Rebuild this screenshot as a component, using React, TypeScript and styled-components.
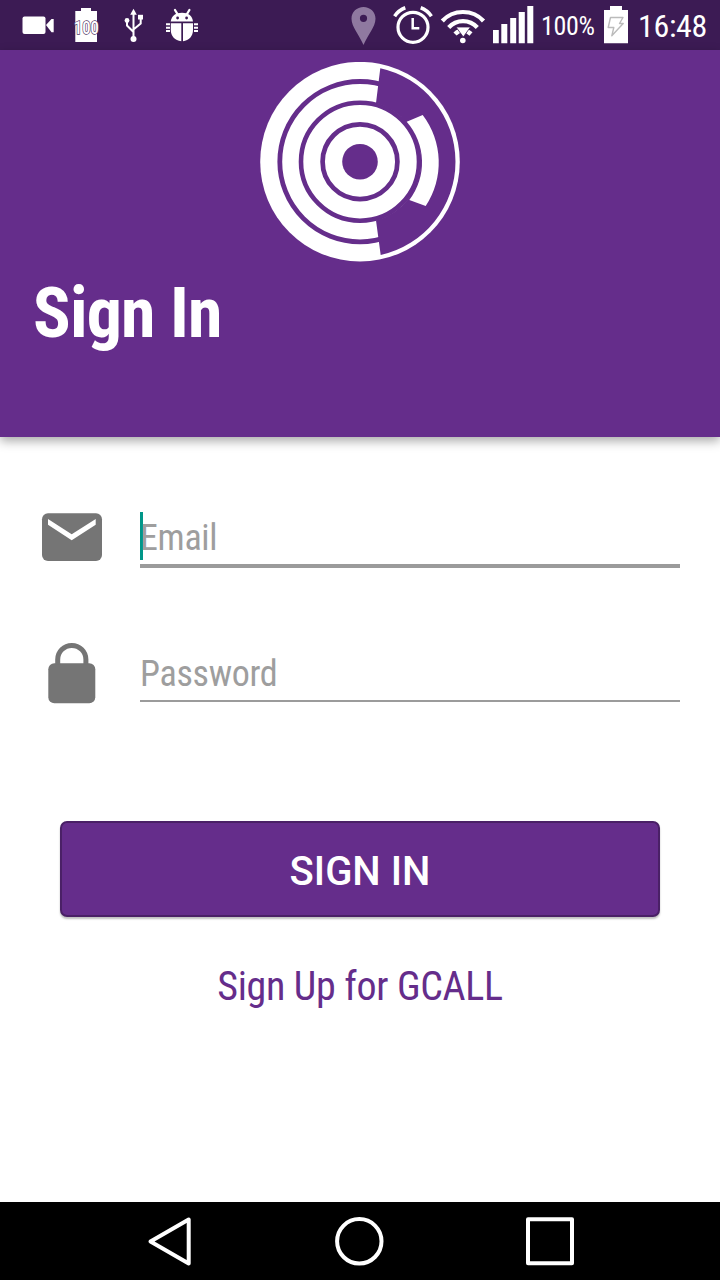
import React from 'react';
import styled, { createGlobalStyle } from 'styled-components';

const PURPLE = '#652d8b';
const STATUS = '#3c1b54';

const GlobalStyle = createGlobalStyle`
  *, *::before, *::after { box-sizing: border-box; }
  body { margin: 0; background: #fff; }
`;

const Screen = styled.div`
  display: flex;
  flex-direction: column;
  width: 720px;
  height: 1280px;
  overflow: hidden;
  background: #fff;
  font-family: 'Roboto Condensed', Roboto, sans-serif;
  font-stretch: 75%;
`;

const StatusBar = styled.div`
  display: flex;
  justify-content: space-between;
  flex: none;
  height: 50px;
  background: ${STATUS};
  color: #fff;
`;

const StatusGroup = styled.div`
  display: flex;
  align-items: center;
  height: 50px;
`;

const Glyph = styled.svg`
  display: block;
  flex: none;
`;

const StatusText = styled.span<{ $size: number; $width: number }>`
  width: ${(p) => p.$width}px;
  font-size: ${(p) => p.$size}px;
  letter-spacing: -0.35px;
  line-height: 50px;
  white-space: nowrap;
  padding-top: 2px;
`;

const Header = styled.header`
  display: flex;
  flex-direction: column;
  flex: none;
  height: 387px;
  padding-top: 12px;
  background: ${PURPLE};
  box-shadow: 0 4px 10px rgba(0, 0, 0, 0.34);
`;

const Logo = styled.svg`
  align-self: center;
  flex: none;
`;

const Title = styled.h1`
  margin: 10px 0 0 33px;
  font-size: 70px;
  font-weight: 700;
  letter-spacing: -0.85px;
  line-height: 82px;
  color: #fff;
`;

const Form = styled.main`
  display: flex;
  flex-direction: column;
  flex: 1;
  padding-top: 75px;
`;

const FieldRow = styled.label<{ $gap: number }>`
  display: flex;
  height: 64px;
  margin-bottom: ${(p) => p.$gap}px;
  padding: 0 40px;
`;

const FieldIcon = styled.svg`
  display: block;
  flex: none;
  margin-right: 36px;
  overflow: visible;
`;

const Field = styled.div<{ $active?: boolean }>`
  display: flex;
  flex: 1;
  height: ${(p) => (p.$active ? 56 : 54)}px;
  border-bottom: ${(p) => (p.$active ? 4 : 2)}px solid #9b9b9b;
`;

const Caret = styled.span`
  width: 3px;
  height: 48px;
  margin-right: -3px;
  background: #009688;
`;

const Placeholder = styled.span`
  font-size: 36px;
  letter-spacing: -0.3px;
  line-height: 52px;
  color: #9e9e9e;
`;

const SubmitButton = styled.button`
  flex: none;
  height: 96px;
  margin: 0 60px;
  padding: 5px 0 0;
  border: 2px solid #4a2066;
  border-radius: 7px;
  background: ${PURPLE};
  box-shadow: 0 2px 2px rgba(0, 0, 0, 0.25);
  font-family: Roboto, sans-serif;
  font-stretch: 100%;
  font-size: 40px;
  font-weight: 500;
  line-height: 48px;
  color: #fff;
`;

const SignUpLink = styled.a`
  align-self: center;
  margin-top: 46px;
  font-size: 40px;
  letter-spacing: -0.33px;
  line-height: 48px;
  color: ${PURPLE};
`;

const NavBar = styled.nav`
  display: flex;
  align-items: center;
  justify-content: center;
  gap: 142px;
  flex: none;
  height: 78px;
  background: #000;
`;

const NavIcon = styled.svg`
  display: block;
  overflow: visible;
  fill: none;
  stroke: #fff;
  stroke-width: 4;
  stroke-linejoin: round;
`;

export default function App() {
  return (
    <>
      <GlobalStyle />
      <Screen>
        <StatusBar>
          <StatusGroup>
            <Glyph width="220" height="50" viewBox="0 0 220 50" fill="#fff">
              <rect x="22.5" y="16.5" width="23" height="17.5" rx="2" />
              <path d="M46 25 L51.5 19 H53.7 V32.3 H51.5Z" />
              <path d="M75.3 11 H81 V8 H91 V11 H97 V42 H75.3Z" />
              <text x="86.3" y="33.6" textAnchor="middle" fontFamily="Roboto" fontSize="17.5" fontWeight="500" stroke="#553b69" strokeWidth="1.3" paintOrder="stroke" textLength="25" lengthAdjust="spacingAndGlyphs">100</text>
              <path d="M133.5 13 V37 M127 21 V25.5 L133.5 32 M140.7 18 V23.5 L133.5 29.5" fill="none" stroke="#fff" strokeWidth="2" />
              <path d="M133.5 8.7 L136.8 14.8 H130.2Z" />
              <circle cx="127" cy="20.5" r="2.4" />
              <rect x="138" y="14.8" width="5" height="4.7" />
              <circle cx="133.5" cy="39" r="3" />
              <g>
                <path d="M170.7 21.6 C171.5 16 175.5 12.8 182 12.8 C188.5 12.8 192.3 16 193 21.6Z" />
                <path d="M175 10 L178 15 M189.4 10 L186.4 15" stroke="#fff" strokeWidth="2.3" strokeLinecap="round" />
                <circle cx="177.6" cy="18" r="1.4" fill={STATUS} />
                <circle cx="186.6" cy="18" r="1.4" fill={STATUS} />
                <path d="M170.8 23.2 H181.3 V41.2 C175 40.7 170.8 36 170.8 30Z M183 23.2 H193 V30 C193 36 189 40.7 183 41.2Z" />
                <path d="M166 24.3 H170 M166 27.7 H170 M166 31 H170 M194 24.3 H198 M194 27.7 H198 M194 31 H198" stroke="#fff" strokeWidth="1.9" />
              </g>
            </Glyph>
          </StatusGroup>
          <StatusGroup>
            <Glyph width="201" height="50" viewBox="340 0 201 50" fill="#fff">
              <path fillRule="evenodd" fill="#8f79a0" d="M363.5 7 C356.8 7 351.5 12 351.5 18.7 C351.5 27 359.5 35 363.5 45 C367.5 35 375.5 27 375.5 18.7 C375.5 12 370.2 7 363.5 7Z M363.5 14.7 A3.6 3.6 0 1 1 363.5 21.9 A3.6 3.6 0 1 1 363.5 14.7Z" />
              <g fill="none" stroke="#fff">
                <circle cx="413" cy="27.3" r="15" strokeWidth="3.2" />
                <path d="M412.7 18 V28.3 H419.3" strokeWidth="2.5" />
                <path d="M394.6 16.2 Q398.8 10.2 405.3 7.8 M431.4 16.2 Q427.2 10.2 420.7 7.8" strokeWidth="3.6" />
                <path d="M442.3 21 C453 9 473 9 483.5 21" strokeWidth="4.2" />
                <path d="M448.7 27.5 C456.5 19 469.5 19 477.3 27.5" strokeWidth="4.2" />
                <path d="M455 34 Q462.7 26.5 471 34" strokeWidth="4.5" />
              </g>
              <path d="M456 27 H470.5 L463.3 37Z" stroke={STATUS} strokeWidth="0.8" />
              <circle cx="462.8" cy="40.5" r="2.8" />
              <path d="M493 30 H498.8 V43.3 H493Z M501.3 24 H507.3 V43.3 H501.3Z M510.2 18 H516.2 V43.3 H510.2Z M518.7 12 H524.8 V43.3 H518.7Z M527.3 6 H533.3 V43.3 H527.3Z" />
            </Glyph>
            <StatusText $size={26} $width={63}>100%</StatusText>
            <Glyph width="34" height="50" viewBox="604 0 34 50">
              <path fill="#fff" d="M604 10 H610 V6 H622 V10 H628 V43.3 H604Z" />
              <path fill="none" stroke="#bbb" strokeWidth="1.4" strokeLinejoin="round" d="M610.5 17.5 H623 L619.5 23.5 H623.2 L611.8 35.8 L613.8 27.5 H608.2Z" />
            </Glyph>
            <StatusText $size={32} $width={82}>16:48</StatusText>
          </StatusGroup>
        </StatusBar>

        <Header>
          <Logo width="200" height="200" viewBox="0 0.3 200 200">
            <circle cx="100" cy="100" r="99.8" fill="#fff" />
            <g fill="none" stroke={PURPLE}>
              <circle cx="100" cy="100" r="80.2" strokeWidth="4.8" />
              <circle cx="100" cy="100" r="59" strokeWidth="4.6" />
              <circle cx="100" cy="100" r="37.4" strokeWidth="4.7" />
            </g>
            <circle cx="100" cy="100" r="17.8" fill={PURPLE} />
            <path fill={PURPLE} d="M116 41.2 L120.3 6.6 A95.6 95.6 0 0 1 120.7 193.3 L116 158.9 A61 61 0 0 0 116 41.2Z" />
            <path fill="#fff" d="M146.7 60 L162.7 53.3 A78.7 78.7 0 0 1 165.7 144.3 L149.3 138.3 A61.8 61.8 0 0 0 146.7 60Z" />
          </Logo>
          <Title>Sign In</Title>
        </Header>

        <Form>
          <FieldRow $gap={72}>
            <FieldIcon width="64" height="64" viewBox="0 0 64 64">
              <rect x="2" y="1.3" width="60" height="47.8" rx="6" fill="#757575" />
              <path d="M8 7 L31.7 22.3 L55.7 7 V12.7 L31.7 28.3 L8 12.7Z" fill="#fff" />
            </FieldIcon>
            <Field $active>
              <Caret />
              <Placeholder>Email</Placeholder>
            </Field>
          </FieldRow>
          <FieldRow $gap={109}>
            <FieldIcon width="64" height="64" viewBox="0 0 64 64">
              <rect x="8.3" y="15.3" width="47" height="40" rx="6" fill="#757575" />
              <path d="M17.7 17 V12 A14.1 14.1 0 0 1 45.9 12 V17" fill="none" stroke="#757575" strokeWidth="5" transform="translate(0 -0.5)" />
            </FieldIcon>
            <Field>
              <Placeholder>Password</Placeholder>
            </Field>
          </FieldRow>
          <SubmitButton type="button">SIGN IN</SubmitButton>
          <SignUpLink>Sign Up for GCALL</SignUpLink>
        </Form>

        <NavBar>
          <NavIcon width="44" height="50" viewBox="0 0 44 50">
            <path d="M42.7 3.5 V47.5 L4.5 25.5Z" />
          </NavIcon>
          <NavIcon width="50" height="50" viewBox="0 0 50 50">
            <circle cx="27.3" cy="25.3" r="22.2" />
          </NavIcon>
          <NavIcon width="50" height="50" viewBox="0 0 50 50">
            <rect x="4" y="3.3" width="44" height="44" />
          </NavIcon>
        </NavBar>
      </Screen>
    </>
  );
}
